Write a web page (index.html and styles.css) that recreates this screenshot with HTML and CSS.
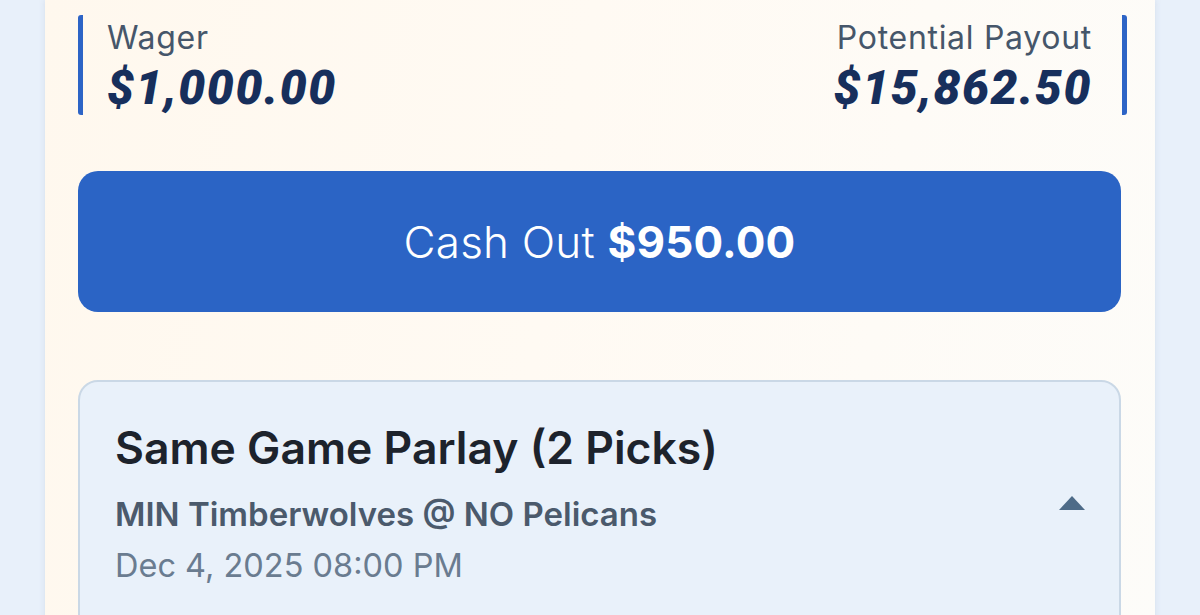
FILE: index.html
```html
<!DOCTYPE html>
<html>
<head>
<meta charset="utf-8">
<link rel="stylesheet" href="styles.css">
</head>
<body>
<div class="page">
  <div class="card">
    <div class="stats">
      <div class="stat stat-left">
        <div class="stat-label">Wager</div>
        <div class="stat-value">$1,000.00</div>
      </div>
      <div class="stat stat-right">
        <div class="stat-label">Potential Payout</div>
        <div class="stat-value">$15,862.50</div>
      </div>
    </div>
    <button class="cashout">Cash Out <strong>$950.00</strong></button>
    <div class="parlay">
      <div class="parlay-text">
        <div class="parlay-title">Same Game Parlay (2 Picks)</div>
        <div class="parlay-game">MIN Timberwolves @ NO Pelicans</div>
        <div class="parlay-date">Dec 4, 2025 08:00 PM</div>
      </div>
      <div class="caret"></div>
    </div>
  </div>
</div>
</body>
</html>
```

FILE: styles.css
```css
html, body {
  margin: 0;
  padding: 0;
  height: 100%;
  overflow: hidden;
}
body {
  background: #e8f0fa;
  font-family: "Inter", "Noto Sans", sans-serif;
}
.page {
  padding: 0 45px;
}
.card {
  background: linear-gradient(100deg, #fff8ee 0%, #fffaf3 45%, #fdfcf9 100%);
  box-shadow: 0 0 6px rgba(120, 140, 170, 0.18);
  padding: 15px 34px 0 33px;
  height: 640px;
  box-sizing: border-box;
}
.stats {
  display: flex;
  justify-content: space-between;
  margin-right: -6px;
  height: 100px;
}
.stat {
  display: flex;
  flex-direction: column;
  justify-content: flex-start;
}
.stat-left {
  border-left: 5px solid #2d64c6;
  border-radius: 3px;
  padding-left: 24px;
  align-items: flex-start;
}
.stat-right {
  border-right: 5px solid #2d64c6;
  border-radius: 3px;
  padding-right: 30px;
  align-items: flex-end;
}
.stat-label {
  font-size: 32px;
  color: #46566a;
  line-height: 38px;
  margin-top: 4px;
  letter-spacing: 0.7px;
}
.stat-value {
  font-family: "Roboto", "Liberation Sans", sans-serif;
  font-weight: 900;
  font-style: italic;
  font-size: 48px;
  line-height: 50px;
  margin-top: 6px;
  color: #172f5c;
  letter-spacing: 1.6px;
}
.cashout {
  display: block;
  width: 100%;
  height: 141px;
  margin-top: 56px;
  border: none;
  border-radius: 20px;
  background: #2b64c5;
  color: #ffffff;
  font-family: "Inter", "Noto Sans", sans-serif;
  font-size: 44px;
  font-weight: 300;
  letter-spacing: 0.2px;
  padding: 0;
}
.cashout strong {
  font-weight: 700;
}
.parlay {
  margin-top: 68px;
  background: #e9f1fa;
  border: 2px solid #cad8e6;
  border-radius: 20px;
  padding: 40px 34px 40px 35px;
  display: flex;
  justify-content: space-between;
  height: 300px;
  box-sizing: border-box;
  align-items: flex-start;
}
.parlay-title {
  font-size: 44.5px;
  font-weight: 600;
  color: #1d232c;
  line-height: 52px;
}
.parlay-game {
  font-size: 33px;
  font-weight: 600;
  color: #4b5a6c;
  margin-top: 20px;
  line-height: 40px;
}
.parlay-date {
  font-size: 32.5px;
  font-weight: 400;
  color: #6a7c90;
  margin-top: 12px;
  line-height: 40px;
}
.caret {
  width: 0;
  height: 0;
  border-left: 13.5px solid transparent;
  border-right: 13.5px solid transparent;
  border-bottom: 14px solid #4e6b88;
  margin-top: 74px;
}
```
